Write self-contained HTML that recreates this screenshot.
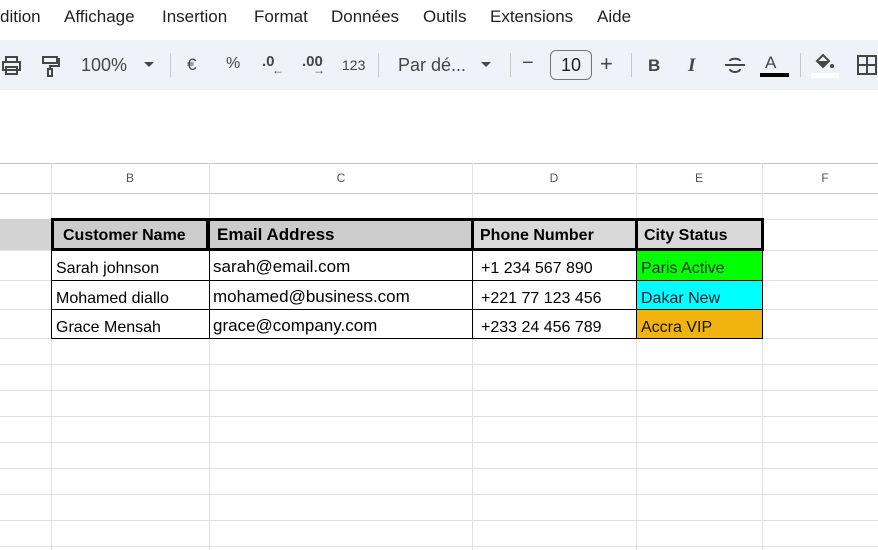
<!DOCTYPE html>
<html><head><meta charset="utf-8"><style>
*{margin:0;padding:0;box-sizing:border-box}
body{width:878px;height:550px;overflow:hidden;background:#fff;font-family:"Liberation Sans",Arial,sans-serif;position:relative}
.a{position:absolute;white-space:nowrap}
.m{top:7px;font-size:17px;color:#1f1f1f}
.tb{position:absolute;left:0;top:40px;width:878px;height:50px;background:#eff2f8}
.t{top:55px;font-size:18px;color:#444746}
.sep{position:absolute;top:53px;width:1px;height:24px;background:#c4c7c5}
.hl{position:absolute;height:1px;background:#e1e1e1;left:0;width:878px}
.vl{position:absolute;width:1px;background:#e1e1e1;top:163px;height:387px}
.ch{top:171px;font-size:12px;color:#555;width:20px;text-align:center}
.c{font-size:16px;color:#000}
.b{font-weight:bold;font-size:16px}
</style></head><body>
<div class="a m" style="left:0">dition</div>
<div class="a m" style="left:64px">Affichage</div>
<div class="a m" style="left:162px">Insertion</div>
<div class="a m" style="left:254px">Format</div>
<div class="a m" style="left:331px">Données</div>
<div class="a m" style="left:423px">Outils</div>
<div class="a m" style="left:490px">Extensions</div>
<div class="a m" style="left:597px">Aide</div>
<div class="tb"></div>
<svg class="a" style="left:0;top:54px" width="24" height="24" viewBox="0 0 24 24" fill="none" stroke="#444746" stroke-width="2"><path d="M6 8V3h11v5M3 8h17v8H3zM6 13h11v7H6z"/></svg>
<svg class="a" style="left:40px;top:54px" width="24" height="24" viewBox="0 0 24 24" fill="none" stroke="#444746" stroke-width="2"><path d="M3 3h14v6H3zM17 5h2v7h-9v3M8 15h4v7H8z"/></svg>
<div class="a t" style="left:81px">100%</div>
<svg class="a" style="left:143px;top:61px" width="12" height="8"><path d="M1 1h10L6 6z" fill="#444746"/></svg>
<div class="sep" style="left:170px"></div>
<div class="a t" style="left:187px;font-size:17px">€</div>
<div class="a t" style="left:226px;font-size:16px">%</div>
<div class="a t" style="left:262px;font-size:15px;top:53px;font-weight:bold">.0</div>
<div class="a t" style="left:272px;font-size:12px;top:63px">←</div>
<div class="a t" style="left:302px;font-size:15px;top:53px;font-weight:bold">.00</div>
<div class="a t" style="left:313px;font-size:12px;top:63px">→</div>
<div class="a t" style="left:342px;font-size:14px;top:57px">123</div>
<div class="sep" style="left:378px"></div>
<div class="a t" style="left:398px">Par dé...</div>
<svg class="a" style="left:480px;top:61px" width="12" height="8"><path d="M1 1h10L6 6z" fill="#444746"/></svg>
<div class="sep" style="left:510px"></div>
<div class="a t" style="left:522px;font-size:20px;top:52px">−</div>
<div class="a" style="left:550px;top:50px;width:42px;height:30px;border:1px solid #747775;border-radius:6px;font-size:18px;text-align:center;line-height:28px;color:#1f1f1f">10</div>
<div class="a t" style="left:600px;font-size:22px;top:51px">+</div>
<div class="sep" style="left:631px"></div>
<div class="a t" style="left:648px;font-weight:bold;font-size:17px;top:56px">B</div>
<div class="a t" style="left:688px;font-style:italic;font-weight:bold;font-family:'Liberation Serif',serif;font-size:19px">I</div>
<svg class="a" style="left:724px;top:55px" width="22" height="20" viewBox="0 0 22 20" fill="none" stroke="#444746" stroke-width="2"><path d="M6 6c0-3 10-3 10 0M1 10h20M6 14c0 4 10 4 10 0"/></svg>
<div class="a t" style="left:765px;font-size:17px;top:53px">A</div>
<div class="a" style="left:760px;top:73px;width:29px;height:4px;background:#000"></div>
<div class="sep" style="left:800px"></div>
<svg class="a" style="left:813px;top:53px" width="24" height="20" viewBox="0 0 24 20"><path d="M4 8l6-6 6 6-6 6z" fill="none" stroke="#444746" stroke-width="2"/><path d="M4 8h12l-6 6z" fill="#444746"/><circle cx="19" cy="13" r="2" fill="#444746"/></svg>
<div class="a" style="left:811px;top:73px;width:28px;height:5px;background:#fff"></div>
<svg class="a" style="left:856px;top:54px" width="22" height="22" viewBox="0 0 22 22" fill="none" stroke="#444746" stroke-width="2"><path d="M2 2h18v18H2zM11 2v18M2 11h18"/></svg>
<div class="a" style="left:0;top:90px;width:878px;height:73px;background:#fff"></div>

<div class="hl" style="top:163px;background:#c7c7c7"></div>
<div class="hl" style="top:193px;background:#c7c7c7"></div>
<div class="hl" style="top:250px"></div><div class="hl" style="top:280px"></div><div class="hl" style="top:309px"></div>
<div class="hl" style="top:338px"></div><div class="hl" style="top:364px"></div><div class="hl" style="top:390px"></div>
<div class="hl" style="top:416px"></div><div class="hl" style="top:442px"></div><div class="hl" style="top:468px"></div>
<div class="hl" style="top:494px"></div><div class="hl" style="top:520px"></div><div class="hl" style="top:546px"></div>
<div class="hl" style="top:219px"></div>
<div class="vl" style="left:51px"></div><div class="vl" style="left:209px"></div><div class="vl" style="left:472px"></div><div class="vl" style="left:636px"></div><div class="vl" style="left:762px"></div>
<div class="a ch" style="left:120px">B</div><div class="a ch" style="left:331px">C</div><div class="a ch" style="left:544px">D</div><div class="a ch" style="left:689px">E</div><div class="a ch" style="left:815px">F</div>
<div class="a" style="left:0;top:219px;width:51px;height:31px;background:#d3d3d3"></div>

<div class="a" style="left:51px;top:218px;width:158px;height:33px;background:#cccccc;border:3px solid #000"></div>
<div class="a" style="left:207px;top:218px;width:267px;height:33px;background:#cccccc;border:3px solid #000"></div>
<div class="a" style="left:471px;top:218px;width:167px;height:33px;background:#d9d9d9;border:3px solid #000"></div>
<div class="a" style="left:635px;top:218px;width:129px;height:33px;background:#d9d9d9;border:3px solid #000"></div>
<div class="a b" style="left:63px;top:227px">Customer Name</div>
<div class="a b" style="left:217px;top:225px;font-size:17px">Email Address</div>
<div class="a b" style="left:480px;top:227px">Phone Number</div>
<div class="a b" style="left:644px;top:227px">City Status</div>

<div class="a" style="left:637px;top:251px;width:125px;height:29px;background:#00ff00"></div>
<div class="a" style="left:637px;top:281px;width:125px;height:28px;background:#00ffff"></div>
<div class="a" style="left:637px;top:310px;width:125px;height:28px;background:#f1b40f"></div>
<div class="a" style="left:51px;top:280px;width:712px;height:1px;background:#000"></div>
<div class="a" style="left:51px;top:309px;width:712px;height:1px;background:#000"></div>
<div class="a" style="left:51px;top:338px;width:712px;height:1px;background:#000"></div>
<div class="a" style="left:51px;top:250px;width:1px;height:89px;background:#000"></div>
<div class="a" style="left:209px;top:250px;width:1px;height:89px;background:#000"></div>
<div class="a" style="left:472px;top:250px;width:1px;height:89px;background:#000"></div>
<div class="a" style="left:636px;top:250px;width:1px;height:89px;background:#000"></div>
<div class="a" style="left:762px;top:250px;width:1px;height:89px;background:#000"></div>

<div class="a c" style="left:56px;top:260px">Sarah johnson</div>
<div class="a c" style="left:56px;top:290px">Mohamed diallo</div>
<div class="a c" style="left:56px;top:319px">Grace Mensah</div>
<div class="a c" style="left:213px;top:257px;font-size:17px">sarah@email.com</div>
<div class="a c" style="left:213px;top:287px;font-size:17px">mohamed@business.com</div>
<div class="a c" style="left:213px;top:316px;font-size:17px">grace@company.com</div>
<div class="a c" style="left:481px;top:260px">+1 234 567 890</div>
<div class="a c" style="left:481px;top:290px">+221 77 123 456</div>
<div class="a c" style="left:481px;top:319px">+233 24 456 789</div>
<div class="a c" style="left:641px;top:260px;color:#0c2a0c">Paris Active</div>
<div class="a c" style="left:641px;top:290px;color:#0a1a2a">Dakar New</div>
<div class="a c" style="left:641px;top:319px;color:#111">Accra VIP</div>
</body></html>
